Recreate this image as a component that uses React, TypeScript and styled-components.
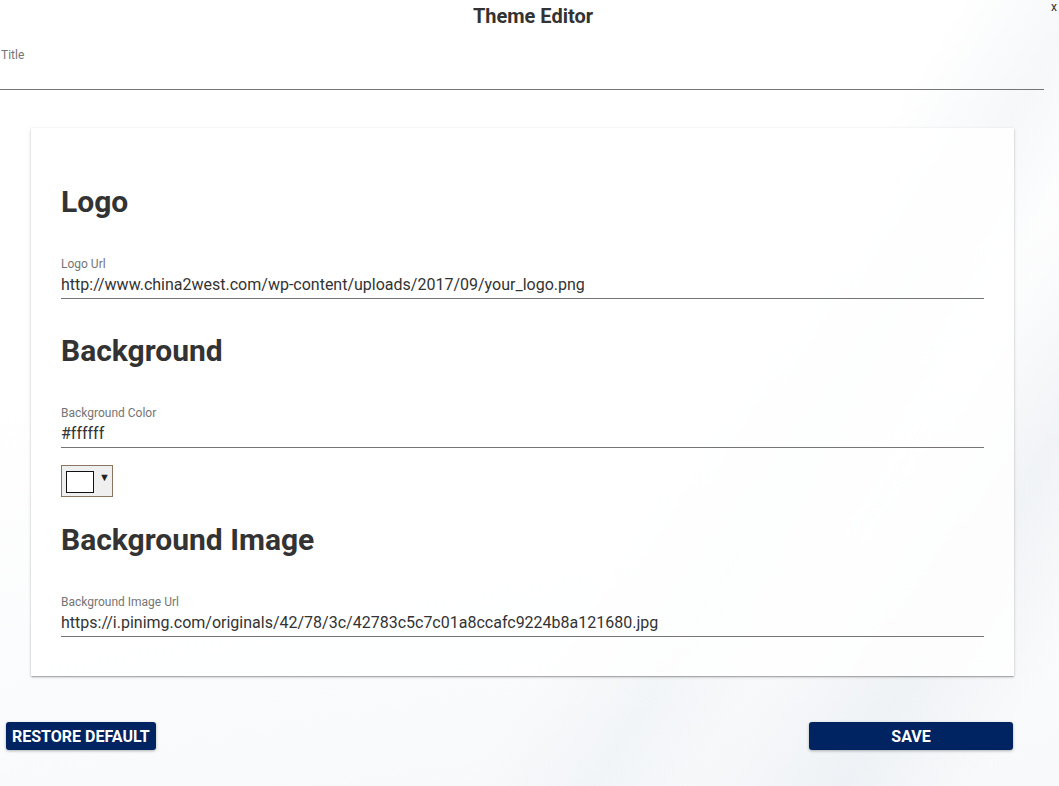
import React from "react";
import styled, { createGlobalStyle } from "styled-components";

const Global = createGlobalStyle`
  html, body { margin: 0; padding: 0; }
  body {
    font-family: Roboto, "Liberation Sans", Arial, sans-serif;
    color: #333;
    background: #fff;
  }
  * { box-sizing: border-box; }
`;

const Page = styled.div`
  position: relative;
  min-height: 786px;
  overflow: hidden;
  background:
    linear-gradient(122deg, rgba(255,255,255,0) 62%, rgba(236,240,244,0.5) 70%, rgba(255,255,255,0) 78%),
    linear-gradient(122deg, rgba(255,255,255,0) 76%, rgba(232,236,241,0.55) 86%, rgba(255,255,255,0.2) 95%),
    linear-gradient(170deg, #ffffff 40%, #f6f8fa 100%);
`;

const Header = styled.h1`
  margin: 0;
  padding: 4px 0 0 7px;
  font-size: 20px;
  line-height: 24px;
  font-weight: 700;
  color: #333;
  text-align: center;
`;

const Close = styled.span`
  position: absolute;
  top: 1px;
  right: 2px;
  font-size: 12px;
  line-height: 12px;
  color: #333;
`;

const TitleField = styled.div`
  margin: 20px 15px 0 1px;
  display: flex;
  flex-direction: column;
`;

const Label = styled.label`
  font-size: 12px;
  line-height: 14px;
  color: #757575;
`;

const TitleInput = styled.div`
  height: 28px;
  margin-left: -1px;
  border-bottom: 1px solid #757575;
`;

const Card = styled.section`
  margin: 38px 45px 0 31px;
  padding: 56px 30px 39px;
  background: rgba(255, 255, 255, 0.82);
  box-shadow: 0 1px 3px rgba(0, 0, 0, 0.2), 0 1px 1px rgba(0, 0, 0, 0.12),
    0 2px 1px -1px rgba(0, 0, 0, 0.1);
  display: flex;
  flex-direction: column;
`;

const Heading = styled.h2<{ $gap: number }>`
  margin: ${(p) => p.$gap}px 0 37px;
  font-size: 30px;
  line-height: 36px;
  font-weight: 700;
  color: #333;
`;

const Field = styled.div`
  display: flex;
  flex-direction: column;
`;

const Value = styled.div`
  padding: 4px 0 4px;
  font-size: 16px;
  line-height: 19px;
  color: #333;
  border-bottom: 1px solid #757575;
`;

const Picker = styled.div`
  margin-top: 17px;
  width: 52px;
  height: 32px;
  border: 1px solid #8a7560;
  background: #efefef;
  display: flex;
  align-items: flex-start;
  padding: 5px 0 0 4px;
  gap: 5px;
`;

const Swatch = styled.div`
  width: 28px;
  height: 22px;
  background: #fff;
  border: 1px solid #111;
`;

const Arrow = styled.span`
  font-size: 11px;
  line-height: 12px;
  margin-top: 1px;
  color: #222;
`;

const Footer = styled.div`
  margin-top: 46px;
  padding: 0 46px 0 6px;
  display: flex;
  justify-content: space-between;
`;

const Button = styled.button<{ $width?: number }>`
  height: 28px;
  ${(p) => (p.$width ? `width: ${p.$width}px;` : "padding: 0 6px;")}
  background: #002461;
  color: #fff;
  border: none;
  border-radius: 3px;
  font-family: Roboto, "Liberation Sans", Arial, sans-serif;
  font-size: 16px;
  font-weight: 700;
  text-transform: uppercase;
  box-shadow: 0 1px 3px rgba(0, 0, 0, 0.3);
  cursor: pointer;
`;

export default function App() {
  return (
    <Page>
      <Global />
      <Header>Theme Editor</Header>
      <Close>x</Close>
      <TitleField>
        <Label>Title</Label>
        <TitleInput />
      </TitleField>
      <Card>
        <Heading $gap={0}>Logo</Heading>
        <Field>
          <Label>Logo Url</Label>
          <Value>http://www.china2west.com/wp-content/uploads/2017/09/your_logo.png</Value>
        </Field>
        <Heading $gap={34}>Background</Heading>
        <Field>
          <Label>Background Color</Label>
          <Value>#ffffff</Value>
        </Field>
        <Picker>
          <Swatch />
          <Arrow>▼</Arrow>
        </Picker>
        <Heading $gap={25}>Background Image</Heading>
        <Field>
          <Label>Background Image Url</Label>
          <Value>https://i.pinimg.com/originals/42/78/3c/42783c5c7c01a8ccafc9224b8a121680.jpg</Value>
        </Field>
      </Card>
      <Footer>
        <Button>Restore Default</Button>
        <Button $width={204}>Save</Button>
      </Footer>
    </Page>
  );
}
